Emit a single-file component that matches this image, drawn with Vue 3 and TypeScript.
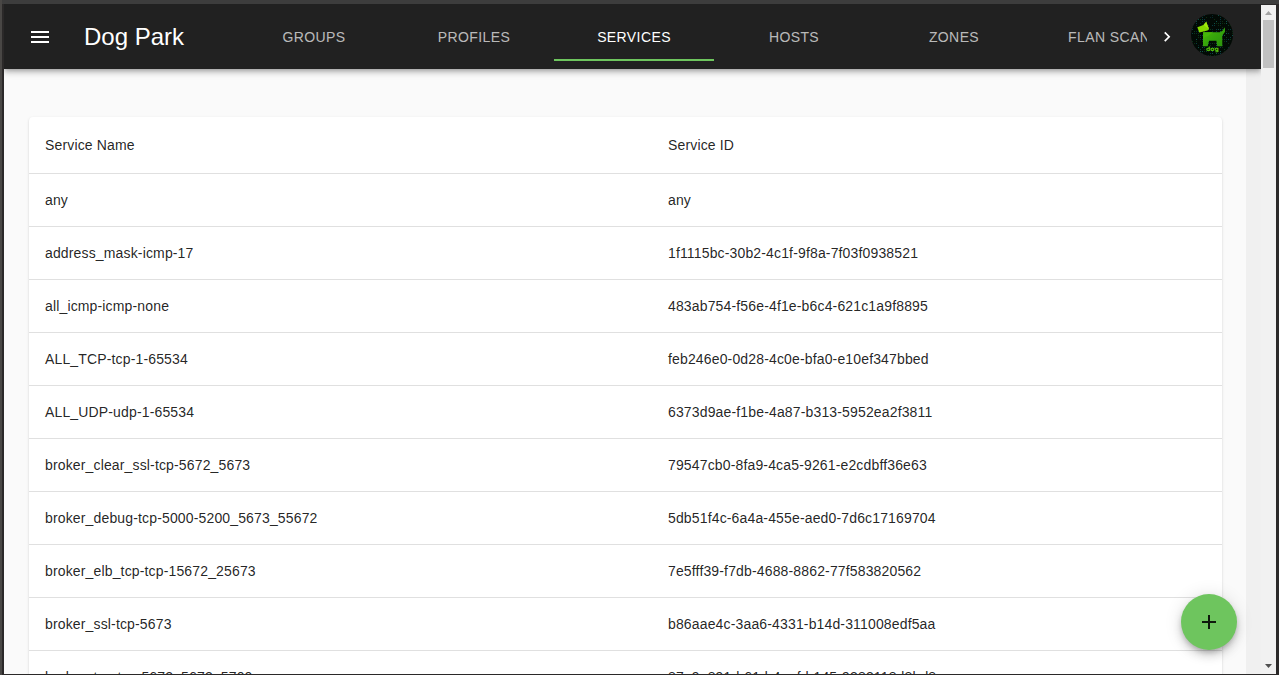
<script setup lang="ts">
interface Service {
  name: string
  id: string
}

interface Speck {
  x: number
  y: number
  fill: string
}

const tabs: string[] = ['Groups', 'Profiles', 'Services', 'Hosts', 'Zones', 'Flan Scans']
const activeTab = 'Services'

const services: Service[] = [
  { name: 'any', id: 'any' },
  { name: 'address_mask-icmp-17', id: '1f1115bc-30b2-4c1f-9f8a-7f03f0938521' },
  { name: 'all_icmp-icmp-none', id: '483ab754-f56e-4f1e-b6c4-621c1a9f8895' },
  { name: 'ALL_TCP-tcp-1-65534', id: 'feb246e0-0d28-4c0e-bfa0-e10ef347bbed' },
  { name: 'ALL_UDP-udp-1-65534', id: '6373d9ae-f1be-4a87-b313-5952ea2f3811' },
  { name: 'broker_clear_ssl-tcp-5672_5673', id: '79547cb0-8fa9-4ca5-9261-e2cdbff36e63' },
  { name: 'broker_debug-tcp-5000-5200_5673_55672', id: '5db51f4c-6a4a-455e-aed0-7d6c17169704' },
  { name: 'broker_elb_tcp-tcp-15672_25673', id: '7e5fff39-f7db-4688-8862-77f583820562' },
  { name: 'broker_ssl-tcp-5673', id: 'b86aae4c-3aa6-4331-b14d-311008edf5aa' },
  { name: 'broker_tcp-tcp-5672_5673_5700', id: '87e9a891-b61d-4aef-b145-9383118d8bd8' },
]

// Matrix-style specks behind the dog logo
const shades: string[] = ['#0a3a1a', '#083a40', '#0e2e10', '#0f5248', '#08262a']
const specks: Speck[] = []
let seed = 7
for (let y = 1; y < 42; y += 2) {
  for (let x = 1; x < 42; x += 2) {
    seed = (seed * 16807) % 2147483647
    const roll = (seed >> 8) % 10
    if (roll < 5) specks.push({ x, y, fill: shades[roll] ?? '#0a3a1a' })
  }
}
</script>

<template>
  <div class="window">
    <div class="viewport">
      <div class="page">
        <header class="appbar">
          <svg class="menu" viewBox="0 0 24 24"><path d="M3 18h18v-2H3v2zm0-5h18v-2H3v2zm0-7v2h18V6H3z" /></svg>
          <h1 class="title">Dog Park</h1>
          <nav class="tabs">
            <button v-for="tab in tabs" :key="tab" class="tab" :class="{ active: tab === activeTab }">{{ tab }}</button>
          </nav>
          <svg class="next" viewBox="0 0 24 24"><path d="M8.59 16.34l4.58-4.59-4.58-4.59L10 5.75l6 6-6 6z" /></svg>
          <svg class="logo" viewBox="0 0 42 42">
            <defs>
              <clipPath id="disc"><circle cx="21" cy="21" r="21" /></clipPath>
              <linearGradient id="coat" x1="0" y1="0" x2="1" y2="1">
                <stop offset="0" stop-color="#4fbd08" />
                <stop offset="0.5" stop-color="#36a50b" />
                <stop offset="1" stop-color="#2b920c" />
              </linearGradient>
            </defs>
            <g clip-path="url(#disc)">
              <rect width="42" height="42" fill="#020a05" />
              <rect v-for="(s, i) in specks" :key="i" :x="s.x" :y="s.y" width="1" height="1" :fill="s.fill" />
              <path d="M6.3 13.3L12.5 11 15.2 7.8 18 15 16.5 16.5 8.3 18.4z" fill="#84d800" />
              <path d="M12.5 11L15.2 7.8 18 15z" fill="#a0e80c" />
              <path d="M12.2 18.2H29L31.5 16.7 33.8 13.3 34 17.7 31.3 21.5V32.3H26.2L25.4 26.8H18L16.7 32.3H12V24z" fill="url(#coat)" />
              <path d="M12.2 18.2H22L17 22 12 24z" fill="#45b808" />
              <text x="21.4" y="36.5" text-anchor="middle">dog</text>
            </g>
          </svg>
        </header>
        <main class="content">
          <div class="card">
            <div class="row head"><span>Service Name</span><span>Service ID</span></div>
            <div v-for="service in services" :key="service.name" class="row">
              <span>{{ service.name }}</span><span>{{ service.id }}</span>
            </div>
          </div>
        </main>
        <button class="fab" aria-label="Add service">
          <svg viewBox="0 0 24 24"><path d="M19 13h-6v6h-2v-6H5v-2h6V5h2v6h6v2z" /></svg>
        </button>
      </div>
      <div class="scrollbar">
        <svg class="arrow up" viewBox="0 0 15 15"><path d="M4 10L7.5 6 11 10z" /></svg>
        <div class="thumb"></div>
        <svg class="arrow down" viewBox="0 0 15 15"><path d="M4 5L7.5 9 11 5z" /></svg>
      </div>
    </div>
  </div>
</template>

<style>
body {
  margin: 0;
  overflow: hidden;
}
</style>

<style scoped>
.window {
  box-sizing: border-box;
  width: 1279px;
  height: 675px;
  padding: 4px 3px 1px 2px;
  border-left: 2px solid #494745;
  background: linear-gradient(#3d3d3d 4px, #2b2929 4px);
  font-family: "Liberation Sans", Arial, sans-serif;
}
.viewport {
  display: flex;
  height: 670px;
  background: #f0f0f0;
}
.page {
  position: relative;
  width: 1257px;
  overflow: hidden;
}
.appbar {
  position: relative;
  z-index: 1;
  display: flex;
  align-items: center;
  box-sizing: border-box;
  height: 65px;
  padding: 1px 28px 0 24px;
  background: #212121;
  color: #fff;
  box-shadow: 0 2px 4px -1px rgba(0, 0, 0, 0.2), 0 4px 5px rgba(0, 0, 0, 0.14), 0 1px 10px rgba(0, 0, 0, 0.12);
}
.menu {
  width: 24px;
  height: 24px;
  flex: none;
  fill: #fff;
}
.title {
  width: 138px;
  margin: 0 0 0 32px;
  flex: none;
  font-size: 24px;
  line-height: 32px;
  font-weight: 400;
  white-space: nowrap;
}
.tabs {
  display: flex;
  width: 913px;
  height: 48px;
  margin-left: 12px;
  flex: none;
  overflow: hidden;
}
.tab {
  width: 160px;
  height: 48px;
  padding: 0;
  flex: none;
  border: 0;
  background: none;
  color: rgba(255, 255, 255, 0.7);
  font: 400 14px/24px "Liberation Sans", Arial, sans-serif;
  letter-spacing: 0.4px;
  text-transform: uppercase;
}
.tab.active {
  color: #fff;
  box-shadow: inset 0 -2px #6ec55e;
}
.next {
  width: 20px;
  height: 20px;
  margin-left: 10px;
  flex: none;
  fill: #fff;
}
.logo {
  width: 42px;
  height: 42px;
  margin: -4px 0 0 auto;
  flex: none;
}
.logo text {
  fill: #5cc80a;
  font: 700 6px "DejaVu Sans", sans-serif;
}
.content {
  width: 1242px;
  height: 605px;
  box-sizing: border-box;
  padding: 48px 24px 0 25px;
  background: #fafafa;
}
.card {
  border-radius: 4px;
  background: #fff;
  box-shadow: 0 2px 1px -1px rgba(0, 0, 0, 0.2), 0 1px 1px rgba(0, 0, 0, 0.14), 0 1px 3px rgba(0, 0, 0, 0.12);
}
.row {
  display: grid;
  grid-template-columns: 623px 1fr;
  box-sizing: border-box;
  height: 53px;
  border-bottom: 1px solid #e0e0e0;
  color: rgba(0, 0, 0, 0.87);
  font-size: 14px;
  line-height: 52px;
  letter-spacing: 0.15px;
}
.row.head {
  height: 57px;
  line-height: 56px;
}
.row span {
  padding-left: 16px;
}
.fab {
  position: absolute;
  right: 24px;
  bottom: 24px;
  z-index: 2;
  display: flex;
  align-items: center;
  justify-content: center;
  width: 56px;
  height: 56px;
  padding: 0;
  border: 0;
  border-radius: 50%;
  background: #6ec55e;
  box-shadow: 0 3px 5px -1px rgba(0, 0, 0, 0.2), 0 6px 10px rgba(0, 0, 0, 0.14), 0 1px 18px rgba(0, 0, 0, 0.12);
}
.fab svg {
  width: 24px;
  height: 24px;
  fill: rgba(0, 0, 0, 0.87);
}
.scrollbar {
  display: flex;
  flex-direction: column;
  align-items: center;
  width: 15px;
  box-sizing: border-box;
  border-top: 1px solid #2b2929;
  background: #f1f1f1;
}
.arrow {
  width: 15px;
  height: 15px;
  flex: none;
}
.up {
  fill: #a3a3a3;
}
.down {
  margin-top: auto;
  fill: #505050;
}
.thumb {
  width: 11px;
  height: 48px;
  background: #c1c1c1;
}
</style>
